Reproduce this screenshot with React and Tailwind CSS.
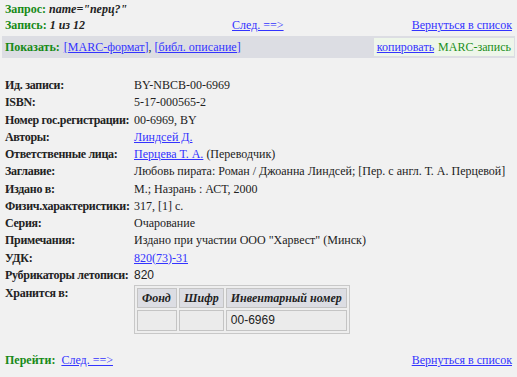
export default function App() {
  const rows = [
    ['Ид. записи:', 'BY-NBCB-00-6969'],
    ['ISBN:', '5-17-000565-2'],
    ['Номер гос.регистрации:', '00-6969, BY'],
    ['Авторы:', <a href="#" className="text-[#3333ff] underline">Линдсей Д.</a>],
    ['Ответственные лица:', <><a href="#" className="text-[#3333ff] underline">Перцева Т. А.</a> (Переводчик)</>],
    ['Заглавие:', 'Любовь пирата: Роман / Джоанна Линдсей; [Пер. с англ. Т. А. Перцевой]'],
    ['Издано в:', 'М.; Назрань : АСТ, 2000'],
    ['Физич.характеристики:', '317, [1] с.'],
    ['Серия:', 'Очарование'],
    ['Примечания:', 'Издано при участии ООО "Харвест" (Минск)'],
    ['УДК:', <a href="#" className="text-[#3333ff] underline">820(73)-31</a>],
    ['Рубрикаторы летописи:', <span className="font-['Liberation_Sans',sans-serif]">820</span>],
  ];

  return (
    <div className="min-h-[377px] bg-[#f1f1f1] font-['Liberation_Serif',serif] text-[12px] leading-[15px] text-[#222] px-[5px] pt-[2px]">
      <div className="h-[15px]">
        <b className="text-[#178a17]">Запрос: </b>
        <b className="italic">name="перц?"</b>
      </div>
      <div className="flex h-[16px] items-end">
        <div className="w-[227px]">
          <b className="text-[#178a17]">Запись: </b>
          <b className="italic">1 из 12</b>
        </div>
        <a href="#" className="text-[#3333ff] underline">След. ==&gt;</a>
        <a href="#" className="ml-auto text-[#3333ff] underline">Вернуться в список</a>
      </div>
      <div className="-mx-[3px] mt-[3px] flex h-[22px] items-center bg-[#dcdde3] pl-[3px] pr-[1px]">
        <b className="text-[#178a17]">Показать:</b>
        <span className="ml-[4px]">
          <a href="#" className="text-[#3333ff] underline">[MARC-формат]</a>,{' '}
          <a href="#" className="text-[#3333ff] underline">[библ. описание]</a>
        </span>
        <div className="ml-auto flex h-[18px] items-center bg-[#eef6ea] px-[3px]">
          <a href="#" className="text-[#3333ff] underline">копировать</a>
          <span className="ml-[4px] text-[#1a8f1a]">MARC-запись</span>
        </div>
      </div>

      <div className="mt-[19px] grid grid-cols-[129px_1fr]">
        {rows.map(([label, value], i) => (
          <div key={i} className="contents">
            <b className="h-[17.25px] whitespace-nowrap leading-[17.25px] tracking-[-0.3px]">{label}</b>
            <div className="h-[17.25px] whitespace-nowrap leading-[17.25px]">{value}</div>
          </div>
        ))}
        <b className="whitespace-nowrap pt-[2px] tracking-[-0.3px]">Хранится в:</b>
        <div className="pt-[1px]">
          <table className="border border-[#c8c8c8] border-separate border-spacing-[2px] bg-[#eeeeee]">
            <thead>
              <tr className="h-[20px]">
                <th className="w-[40px] border border-[#c4c4c4] bg-[#dcdde3] px-[4px] py-0 text-left italic">Фонд</th>
                <th className="w-[44px] border border-[#c4c4c4] bg-[#dcdde3] px-[4px] py-0 text-left italic">Шифр</th>
                <th className="w-[121px] border border-[#c4c4c4] bg-[#dcdde3] px-[4px] py-0 text-left italic">Инвентарный номер</th>
              </tr>
            </thead>
            <tbody>
              <tr className="h-[21px]">
                <td className="border border-[#c4c4c4] bg-[#ebebeb]"></td>
                <td className="border border-[#c4c4c4] bg-[#ebebeb]"></td>
                <td className="border border-[#c4c4c4] bg-[#ebebeb] px-[4px] font-['Liberation_Sans',sans-serif]">00-6969</td>
              </tr>
            </tbody>
          </table>
        </div>
      </div>

      <div className="mt-[19px] flex items-center">
        <b className="text-[#178a17]">Перейти:</b>
        <a href="#" className="ml-[6px] text-[#3333ff] underline">След. ==&gt;</a>
        <a href="#" className="ml-auto text-[#3333ff] underline">Вернуться в список</a>
      </div>
    </div>
  );
}
